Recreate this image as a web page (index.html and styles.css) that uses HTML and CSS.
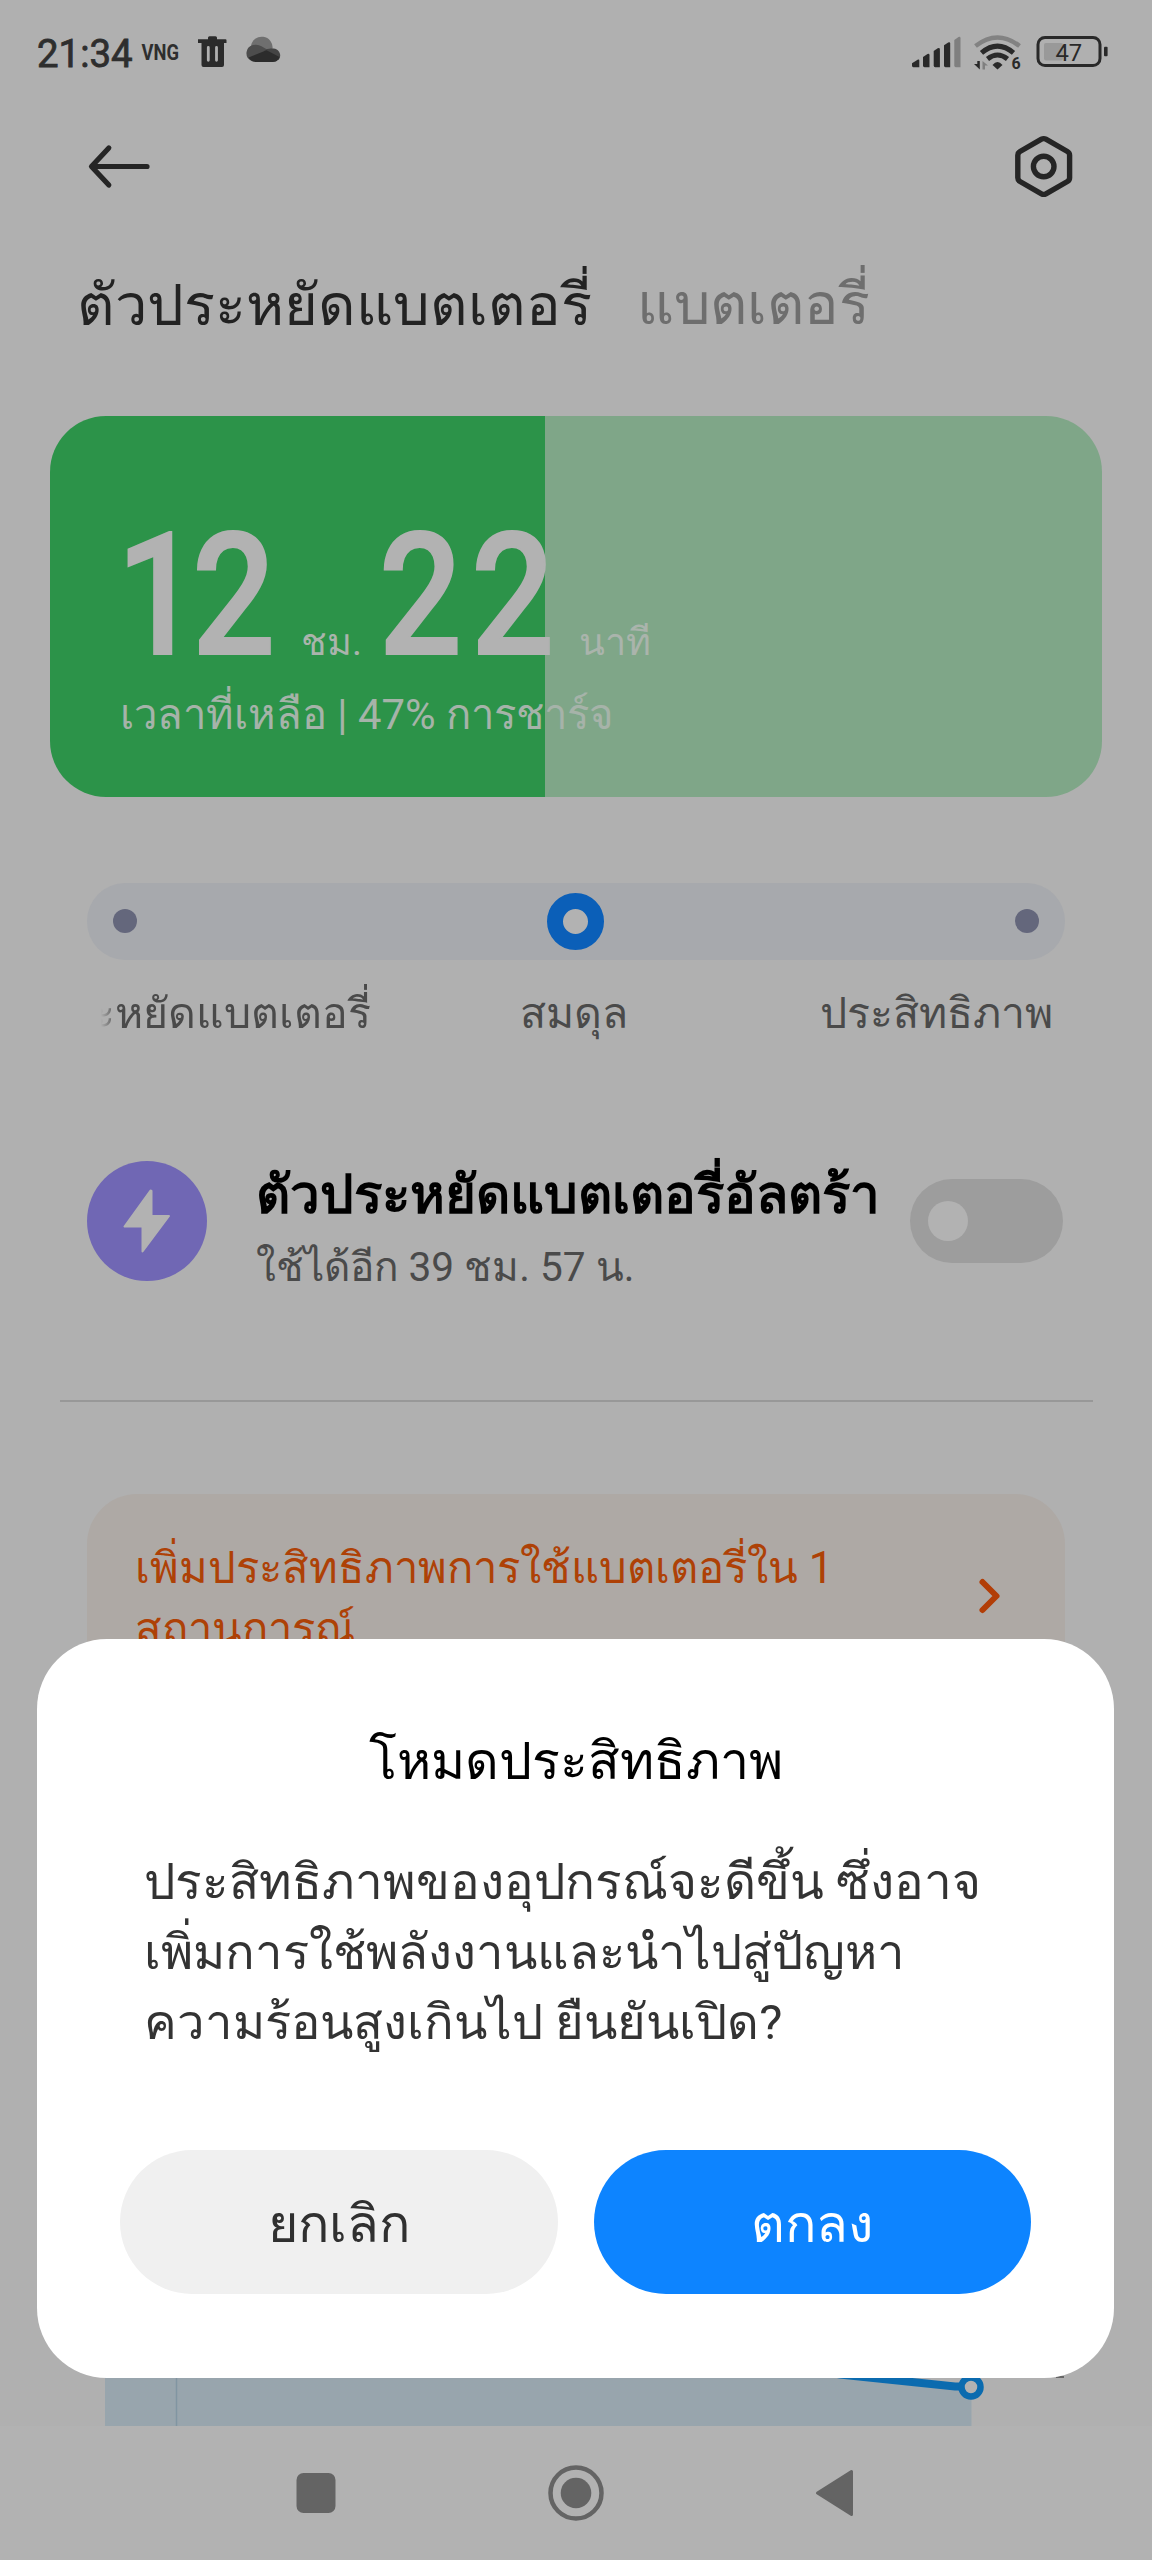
FILE: index.html
```html
<!DOCTYPE html>
<html lang="th">
<head>
<meta charset="utf-8">
<title>แบตเตอรี่</title>
<link rel="stylesheet" href="styles.css">
</head>
<body>
<div class="screen">
  <main class="page">
    <div class="status">
      <div class="status-left">
        <span class="clock">21:34</span>
        <svg class="icon" width="146" height="40" viewBox="140 34 146 40">
          <text class="vng" x="141.500" y="59.500" textLength="37.500" lengthAdjust="spacingAndGlyphs">VNG</text>
          <path fill="#2b2b2b" d="M198 39.300h10v-1.600q0-1.500 1.500-1.500h6q1.500 0 1.500 1.500v1.600h8.500q1 0 1 1v2.700h-2.500v22q0 2-2 2h-18.500q-2 0-2-2v-22H198z"/>
          <path stroke="#b0b0b0" stroke-width="2.800" stroke-linecap="round" d="M208.300 47.500v12.800M216.500 47.500v12.800"/>
          <path fill="#6f6f6f" d="M251 46a10.500 10.500 0 0 1 21.500 3l-9 4z"/>
          <path fill="#4d4d4d" d="M268 50L251 60.500A8.300 8.300 0 0 1 253 45q5-1 8.500 1.200z"/>
          <path fill="#444" d="M264 50.800q3.500-2.600 8-2.200a7 7 0 0 1 6.500 11.400z"/>
          <path fill="#2c2c2c" d="M266.500 50.300L279.500 57q-1.500 5-6.500 5h-17q-5 0-7.500-4.500z"/>
        </svg>
      </div>
      <svg class="icon" width="200" height="40" viewBox="910 34 200 40">
        <g fill="#292929">
          <path d="M912 65.500v-2.200l6-3.800q1.300-.5 1.300 1v6.700h-6q-1.300 0-1.300-1.700z"/>
          <path d="M923 65.500V57l4.500-3q2-.8 2 1.200v12h-5q-1.500 0-1.500-1.700z"/>
          <path d="M933.700 65.500V51l4-2.700q2.200-.8 2.200 1.200v17.700h-4.700q-1.500 0-1.500-1.700z"/>
          <path d="M944 65.500V45.200l4.200-2.800q2-.8 2 1.200v23.600h-4.700q-1.500 0-1.500-1.700z"/>
        </g>
        <path fill="#7f7f7f" d="M954.300 65.500V40l4.200-3q2-.9 2 1.200v29h-4.700q-1.500 0-1.500-1.700z"/>
        <g fill="none" stroke="#292929" stroke-width="5">
          <path stroke="#828282" stroke-width="4.500" d="M975.500 46q22-17 44 0"/>
          <path d="M981.500 52.800q16-13.500 32 0"/>
          <path d="M987.500 59q10-8 20 0"/>
        </g>
        <path fill="#292929" d="M992.500 65q5-6 10 0l-5 4.500z"/>
        <path fill="#292929" d="M977.300 61h2.500v8.500l-5.800-5.500h3.300z"/>
        <path fill="#7f7f7f" d="M982.500 69.500V61l5.500 4.500h-3v4z"/>
        <text class="gen" x="1011.500" y="69.300">6</text>
        <rect x="1044" y="43" width="19" height="17.500" rx="2" fill="#999"/>
        <rect x="1038" y="37.500" width="62" height="28" rx="7" fill="none" stroke="#292929" stroke-width="3"/>
        <rect x="1104" y="46.700" width="3.600" height="9.600" rx="1" fill="#292929"/>
        <text class="pct" x="1055.500" y="61">47</text>
      </svg>
    </div>

    <header class="bar">
      <svg width="64" height="64" viewBox="86 135 64 64" fill="none" stroke="#252525" stroke-width="5.200" stroke-linecap="round" stroke-linejoin="round">
        <path d="M108.800 148L91.500 166.500L108.800 185M92 166.500h55"/>
      </svg>
      <svg width="64" height="64" viewBox="1012 135 64 64" fill="none" stroke="#252525" stroke-width="5.400" stroke-linejoin="round">
        <path d="M1041.500 139.200q2.200-1.200 4.400 0l21.500 12.300q2.200 1.300 2.200 3.800v22.400q0 2.500-2.200 3.800l-21.500 12.300q-2.200 1.200-4.400 0l-21.500-12.300q-2.200-1.300-2.200-3.800v-22.400q0-2.500 2.200-3.800z"/>
        <circle cx="1043.700" cy="166.500" r="10.300"/>
      </svg>
    </header>

    <nav class="tabs">
      <span class="tab active">ตัวประหยัดแบตเตอรี่</span>
      <span class="tab second">แบตเตอรี่</span>
    </nav>

    <section class="battery">
      <div class="time">
        <svg class="digits" width="152" height="130" viewBox="123 525 152 130">
          <text transform="translate(0 654) scale(.865 1)" x="134.500 222">12</text>
        </svg>
        <span class="unit hours">ชม.</span>
        <svg class="digits" width="172" height="130" viewBox="381 525 172 130">
          <text transform="translate(0 654) scale(.865 1)" x="438 544.500">22</text>
        </svg>
        <span class="unit minutes">นาที</span>
      </div>
      <div class="remaining">เวลาที่เหลือ | 47% การชาร์จ</div>
    </section>

    <div class="slider"><i class="stop"></i><i class="thumb"></i><i class="stop"></i></div>
    <div class="modes">
      <span class="mode scrolled">ะหยัดแบตเตอรี่</span>
      <span class="mode balanced">สมดุล</span>
      <span class="mode performance">ประสิทธิภาพ</span>
    </div>

    <section class="ultra">
      <svg class="bolt" width="120" height="120" viewBox="0 0 120 120">
        <circle cx="60" cy="60" r="60" fill="#7067b4"/>
        <path fill="#b2b2b2" stroke="#b2b2b2" stroke-width="2" stroke-linejoin="round" d="M63.500 29.500L37.500 65.500H55.500V90.500L82 55H64.500V30z"/>
      </svg>
      <div class="ultra-text">
        <div class="ultra-title">ตัวประหยัดแบตเตอรี่อัลตร้า</div>
        <div class="ultra-sub">ใช้ได้อีก 39 ชม. 57 น.</div>
      </div>
      <div class="switch"><i class="knob"></i></div>
    </section>
    <div class="divider"></div>

    <section class="tip">
      <div class="tip-text">เพิ่มประสิทธิภาพการใช้แบตเตอรี่ใน 1<br>สถานการณ์</div>
      <svg class="chevron" width="24" height="38" viewBox="978 1578 24 38" fill="none" stroke="#b23e07" stroke-width="6" stroke-linecap="round" stroke-linejoin="round">
        <path d="M982.500 1583L996.500 1597L982.500 1611"/>
      </svg>
    </section>

    <svg class="chart" width="980" height="126" viewBox="100 2300 980 126">
      <path fill="#98a5ad" d="M105 2300H700L860 2379L971.500 2387V2426H105z"/>
      <path stroke="#8195a2" stroke-width="1.500" d="M176.500 2300v126"/>
      <path stroke="#0b6baf" stroke-width="8" fill="none" d="M780 2362L840 2374.500L955 2386.500H971"/>
      <circle cx="971" cy="2387" r="9.500" fill="#b2b2b2" stroke="#0b6baf" stroke-width="6.500"/>
      <path stroke="#666" stroke-width="2" d="M1056 2377h8"/>
    </svg>
  </main>

  <footer class="nav">
    <svg width="40" height="64" viewBox="295.500 2461 40 64"><rect x="296" y="2473" width="39" height="40" rx="7" fill="#646464"/></svg>
    <svg width="64" height="64" viewBox="544 2461 64 64"><circle cx="576" cy="2493" r="25.500" fill="none" stroke="#646464" stroke-width="4.500"/><circle cx="576" cy="2493" r="15.300" fill="#646464"/></svg>
    <svg width="42" height="64" viewBox="814 2461 42 64"><path fill="#646464" stroke="#646464" stroke-width="3" stroke-linejoin="round" d="M817.500 2493L851.500 2471.500V2514.500z"/></svg>
  </footer>

  <div class="dialog" role="dialog">
    <h2 class="dialog-title">โหมดประสิทธิภาพ</h2>
    <p class="dialog-body"><span class="loose">ประสิทธิภาพของอุปกรณ์จะดีขึ้น ซึ่งอาจ</span><br>เพิ่มการใช้พลังงานและนำไปสู่ปัญหา<br><span class="tight">ความร้อนสูงเกินไป ยืนยันเปิด?</span></p>
    <div class="actions">
      <button class="btn">ยกเลิก</button>
      <button class="btn primary">ตกลง</button>
    </div>
  </div>
</div>
</body>
</html>
```
FILE: styles.css
```css
* { box-sizing: border-box; }
body { margin: 0; background: #b0b0b0; font-family: Roboto, sans-serif; }
svg { display: block; flex: none; }
i { display: block; flex: none; }
.screen { position: relative; width: 1152px; height: 2560px; overflow: hidden; white-space: nowrap; }
.page { display: flex; flex-direction: column; height: 2426px; }

/* Status bar */
.status { display: flex; justify-content: space-between; height: 74px; padding: 34px 42px 0 37px; }
.status-left { display: flex; }
.clock { width: 103px; font-size: 38.400px; line-height: 40px; font-weight: 400; color: #2e2e2e; -webkit-text-stroke: .8px #2e2e2e; }
.icon { overflow: visible; }
.vng { font: 700 22px Roboto, sans-serif; fill: #2e2e2e; }
.gen { font: 700 16px Roboto, sans-serif; fill: #292929; }
.pct { font: 400 23.800px Roboto, sans-serif; fill: #292929; }

.bar { display: flex; justify-content: space-between; margin-top: 61px; padding: 0 76px 0 86px; height: 64px; }
.bar svg { overflow: visible; }
.tabs { display: flex; margin-top: 66.300px; padding-left: 77px; height: 80px; font-size: 57.800px; line-height: 80px; }
.tab { color: #6e6e6e; }
.tab.active { width: 510px; color: #222; }
.tab.second { margin-left: 50px; font-size: 57.500px; }

/* Remaining time */
.battery { width: 1052px; height: 381px; margin: 70.700px 0 0 50px; padding: 109px 0 0 73px; border-radius: 56px; color: #b2b2b2; background: linear-gradient(to right, #2c9349 494.500px, #7fa688 494.500px); }
.time { display: flex; align-items: flex-end; height: 130px; }
.digits { overflow: visible; font: 500 170px Roboto, sans-serif; fill: #b2b2b2; stroke: #b2b2b2; stroke-width: 2px; }
.unit { font-size: 37.800px; line-height: 38px; margin-bottom: -6px; color: #aab4ac; }
.hours { width: 80px; margin-left: 26px; }
.minutes { margin-left: 26px; }
.remaining { margin: 34.700px 0 0 -3px; font-size: 41.800px; line-height: 50px; color: #a6b3a9; }

/* Mode slider */
.slider { display: flex; align-items: center; justify-content: space-between; width: 978px; height: 77px; margin: 85.700px 0 0 86.500px; padding: 0 25.500px 0 26px; border-radius: 38px; background: #a7a9ad; }
.stop { width: 24.500px; height: 24.500px; border-radius: 50%; background: #64677c; }
.thumb { width: 57px; height: 57px; border: 16.500px solid #0b5fb8; border-radius: 50%; background: #b2b2b2; }
.modes { display: flex; margin-top: 28.600px; padding-left: 101px; height: 50px; font-size: 42.800px; line-height: 50px; color: #4a4a4a; }
.scrolled { display: flex; justify-content: flex-end; width: 270px; margin: -20px 0; padding: 20px 0; -webkit-mask-image: linear-gradient(to right, transparent, #000 16px); mask-image: linear-gradient(to right, transparent, #000 16px); }
.balanced { width: 110px; margin-left: 148.500px; }
.performance { margin-left: 190.600px; }

/* Ultra saver row */
.ultra { display: flex; margin-top: 122.400px; padding-left: 86.500px; height: 120px; }
.ultra-text { width: 654px; margin-left: 49px; padding-top: 4px; }
.ultra-title { font-size: 52.900px; line-height: 60px; font-weight: 700; color: #000; }
.ultra-sub { margin-top: 17.500px; font-size: 40.600px; line-height: 50px; color: #4a4a4a; }
.switch { display: flex; align-items: center; width: 153px; height: 84px; margin-top: 18.500px; padding-left: 18px; border-radius: 42px; background: #9d9d9d; }
.knob { width: 40px; height: 40px; border-radius: 50%; background: #b2b2b2; }
.divider { height: 2px; margin: 119.300px 59px 0 60px; background: #989898; }

.tip { display: flex; justify-content: space-between; width: 978px; height: 206px; margin: 92px 0 0 87px; padding: 44px 63px 0 48px; border-radius: 50px; background: #aea9a5; }
.tip-text { font-size: 43.600px; line-height: 61px; color: #ae4106; }
.chevron { margin-top: 39px; }
.chart { margin: auto 0 0 100px; }

.nav { display: flex; align-items: center; height: 134px; padding-left: 295.500px; background: #b2b2b2; }
.nav svg:nth-child(2) { margin-left: 208.500px; }
.nav svg:nth-child(3) { margin-left: 206px; }

/* Confirmation sheet */
.dialog { position: absolute; left: 37px; top: 1639px; width: 1077px; height: 739px; padding: 88.200px 83px 0; border-radius: 70px; background: #fff; }
.dialog-title { margin: 0; font-size: 52px; line-height: 70px; font-weight: 400; text-align: center; color: #000; }
.dialog-body { height: 210px; margin: 50.200px 0 0 24px; font-size: 49px; line-height: 70px; color: #333; }
.loose { font-size: 49.550px; }
.tight { font-size: 49px; }
.actions { display: flex; gap: 36px; margin-top: 92.300px; }
.btn { width: 437.500px; height: 144px; padding: 4px 0 0; border: 0; border-radius: 72px; font: 400 52px Roboto, sans-serif; color: #303030; background: #f0f0f0; }
.primary { color: #fff; background: #0d84ff; }
```
